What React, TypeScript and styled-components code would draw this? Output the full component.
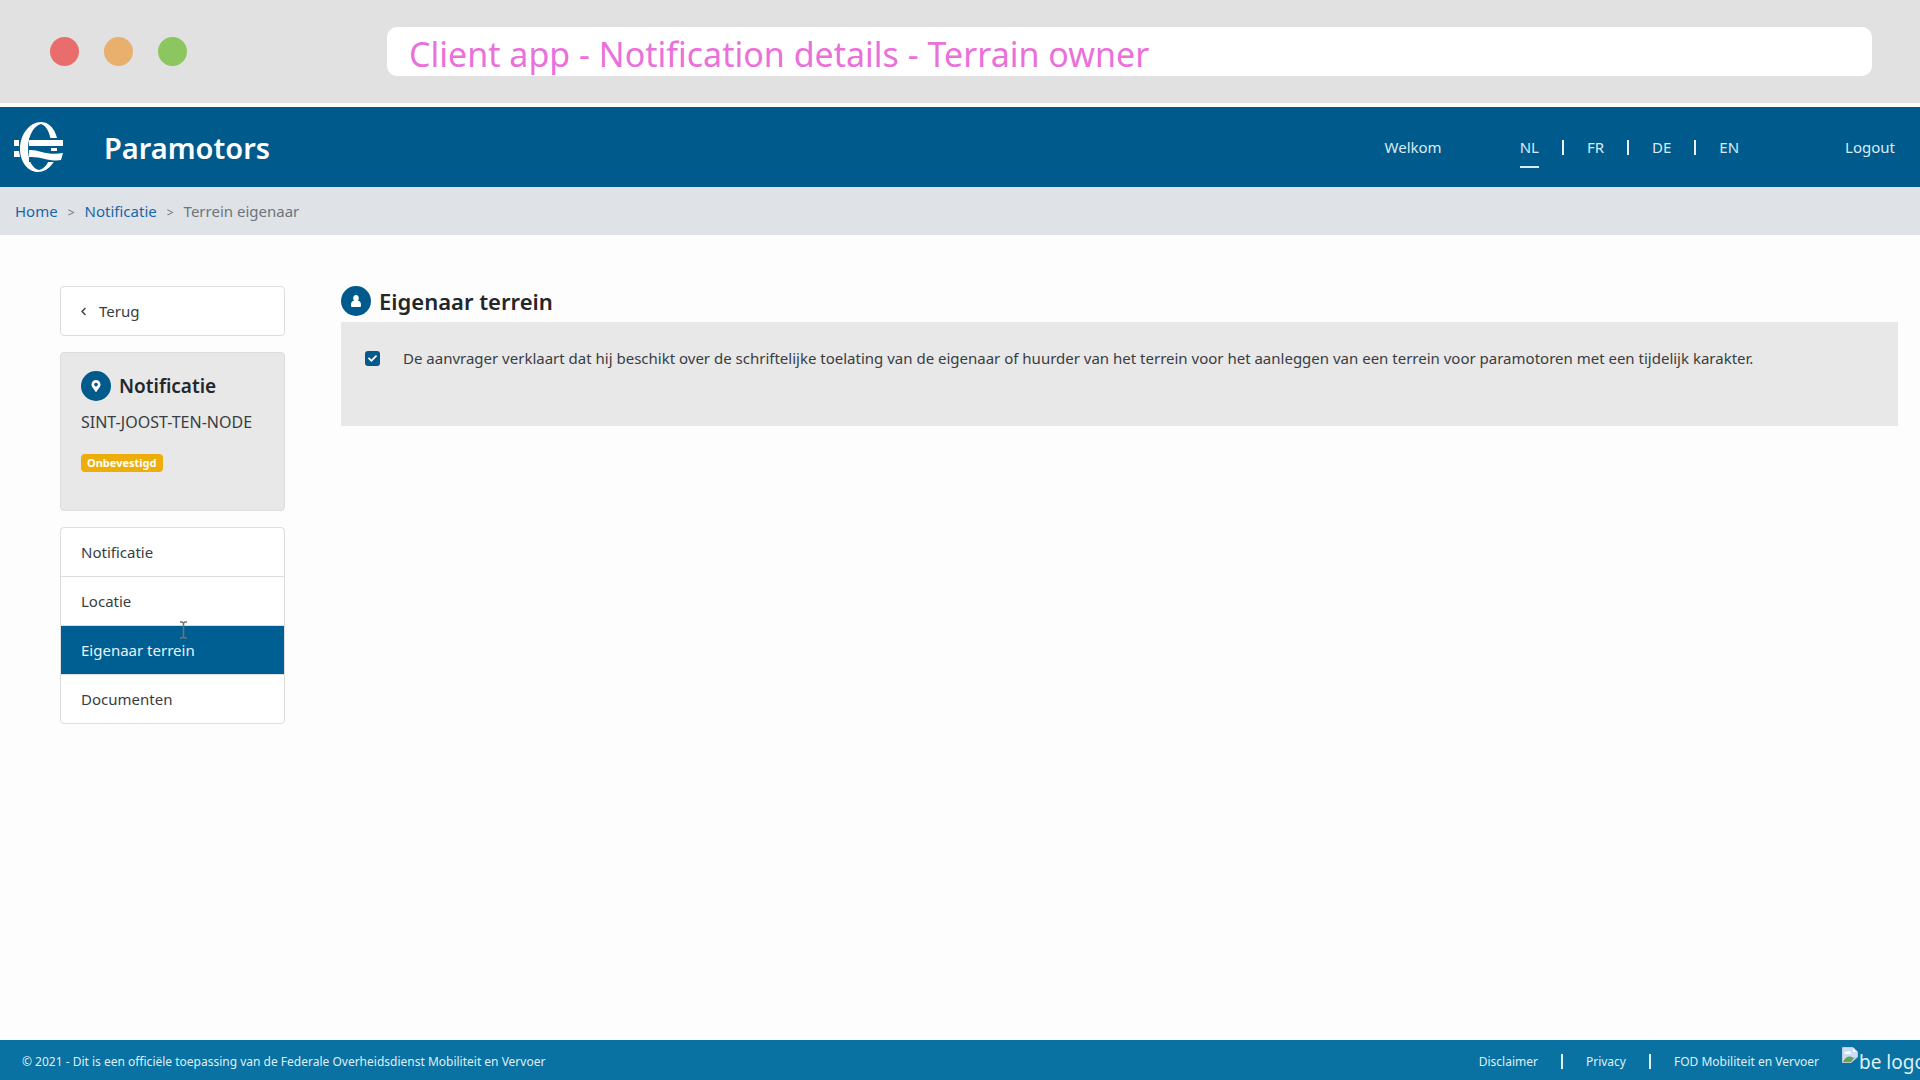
import React from "react";
import styled, { createGlobalStyle } from "styled-components";
import { FaCheck, FaMapMarkerAlt, FaChevronLeft } from "react-icons/fa";

const GlobalStyle = createGlobalStyle`
  *, *::before, *::after { box-sizing: border-box; }
  body {
    margin: 0;
    background: #fdfdfd;
    color: #383d42;
    font-family: "Noto Sans", "Open Sans", sans-serif;
    font-size: 15px;
    line-height: 24px;
  }
  h1, h2, p, ul, ol { margin: 0; padding: 0; }
  ul, ol { list-style: none; }
  a { color: inherit; text-decoration: none; }
`;

const Page = styled.div`
  display: flex;
  flex-direction: column;
  min-height: 100vh;
  overflow-x: hidden;
`;

const BrowserBar = styled.div`
  display: flex;
  align-items: center;
  padding: 27px 48px 27px 50px;
  background: #e1e1e1;
`;

const Dots = styled.div`
  display: flex;
  gap: 25px;
  margin-right: 200px;
`;

const Dot = styled.span<{ $color: string }>`
  width: 29px;
  height: 29px;
  border-radius: 50%;
  background: ${(p) => p.$color};
`;

const Address = styled.input`
  flex: 1;
  min-width: 0;
  height: 49px;
  padding: 4px 22px 0;
  border: 0;
  border-radius: 10px;
  background: #fff;
  color: #ea70da;
  font-family: "Noto Sans", "Open Sans", sans-serif;
  font-size: 34px;
  outline: none;
`;

const Header = styled.header`
  display: flex;
  align-items: center;
  height: 80px;
  margin-top: 4px;
  padding: 0 25px 0 13px;
  background: #005b8c;
  color: #fff;
`;

const Brand = styled.h1`
  margin-left: 38px;
  padding-top: 2px;
  font-size: 29px;
  line-height: 40px;
  font-weight: 600;
`;

const HeaderNav = styled.nav`
  display: flex;
  align-items: center;
  margin-left: auto;
  color: #d9ecf5;
`;

const Languages = styled.ul`
  display: flex;
  align-items: center;
  margin: 0 106px 0 78px;
`;

const Language = styled.li`
  display: flex;
  align-items: center;

  & + &::before {
    content: "";
    width: 2px;
    height: 15px;
    margin: 0 23px;
    background: #e6f2f7;
  }
`;

const LanguageLink = styled.a<{ $active?: boolean }>`
  padding: 9px 0 7px;
  border-bottom: 2px solid ${(p) => (p.$active ? "#d9ecf5" : "transparent")};
`;

const Breadcrumb = styled.nav`
  padding: 12px 15px;
  background: #dfe2e6;
  color: #6c757d;

  ol { display: flex; }
  li + li::before { content: ">"; margin: 0 10px; font-size: 12px; line-height: 12px; }
  a { color: #1767a8; }
`;

const Content = styled.div`
  display: flex;
  flex: 1;
  align-items: flex-start;
  gap: 56px;
  padding: 51px 22px 51px 60px;
`;

const Sidebar = styled.aside`
  display: flex;
  flex-direction: column;
  flex: none;
  gap: 16px;
  width: 225px;
`;

const BackButton = styled.button`
  display: flex;
  align-items: center;
  gap: 11px;
  height: 50px;
  padding: 0 18px;
  border: 1px solid #dcdddf;
  border-radius: 4px;
  background: #fff;
  color: #383d42;
  font: inherit;
`;

const Card = styled.section`
  height: 159px;
  padding: 18px 20px;
  border: 1px solid #dcdddf;
  border-radius: 4px;
  background: #e8e8e8;
`;

const Title = styled.h2<{ $size: number }>`
  display: flex;
  align-items: center;
  gap: 8px;
  color: #23272b;
  font-size: ${(p) => p.$size}px;
  line-height: 30px;
  font-weight: 600;
`;

const IconCircle = styled.span`
  display: grid;
  place-items: center;
  width: 30px;
  height: 30px;
  border-radius: 50%;
  background: #005b8c;
  color: #fff;
`;

const Location = styled.p`
  margin-top: 9px;
  font-size: 16px;
`;

const Badge = styled.span`
  display: inline-block;
  margin-top: 20px;
  padding: 0 6px;
  border-radius: 4px;
  background: #edae0c;
  color: #fff;
  font-size: 11px;
  line-height: 18px;
  font-weight: 700;
`;

const Menu = styled.ul`
  border: 1px solid #dcdddf;
  border-radius: 4px;
  background: #fff;

  li + li { border-top: 1px solid #dcdddf; }
`;

const MenuLink = styled.a<{ $active?: boolean }>`
  display: block;
  padding: 12px 20px;
  background: ${(p) => (p.$active ? "#005f92" : "transparent")};
  color: ${(p) => (p.$active ? "#e9f3f8" : "inherit")};
`;

const Main = styled.main`
  flex: 1;
  min-width: 0;
`;

const Panel = styled.div`
  min-height: 104px;
  margin-top: 6px;
  padding: 24px;
  background: #e8e8e8;
`;

const CheckLabel = styled.label`
  display: flex;
  align-items: center;
  gap: 23px;
`;

const CheckBox = styled.span`
  display: grid;
  flex: none;
  width: 15px;
  height: 15px;

  > * { grid-area: 1 / 1; place-self: center; }
  svg { color: #fff; pointer-events: none; }
`;

const CheckInput = styled.input`
  width: 15px;
  height: 15px;
  margin: 0;
  border-radius: 3px;
  appearance: none;
  background: #005b8c;
`;

const Footer = styled.footer`
  display: flex;
  align-items: center;
  justify-content: space-between;
  height: 40px;
  padding: 3px 0 0 22px;
  background: #0a71a3;
  color: #dff0f8;
  font-size: 12px;
  white-space: nowrap;
`;

const FooterLinks = styled.ul`
  display: flex;
  align-items: center;
`;

const FooterItem = styled.li`
  display: flex;
  align-items: center;

  & + &::before {
    content: "";
    width: 2px;
    height: 15px;
    margin: 0 23px;
    background: #dff0f8;
  }
`;

const MissingLogo = styled.li`
  display: flex;
  width: 78px;
  margin-left: 23px;
  overflow: hidden;
  font-size: 19px;
  line-height: 32px;

  svg { flex: none; }
`;

const PointerSpot = styled.div`
  position: relative;
`;

const Pointer = styled.svg`
  position: absolute;
  left: 119px;
  bottom: 85px;
`;

const MobilityLogo = () => (
  <svg width="53" height="52" viewBox="0 0 53 52" aria-hidden="true">
    <path fillRule="evenodd" fill="#fff" d="M28 1C38 1 45 12 45 25C45 39 36 51 25 51C15 51 7 41 7 28C7 13 17 1 28 1ZM28 3C21 5 15 14 15 28C15 40 20 48 26 49C34 47 38 38 38 25C38 13 34 5 28 3Z" />
    <path fill="#005b8c" d="M16 17H53V41H16Z" />
    <path fill="#fff" d="M1 19H6V25H1ZM16 19H50V25H16ZM1 30H6L7 36H1ZM16 29C25 28 34 35 50 32L48 39C37 41 27 35 16 36ZM38 27H44V30H38Z" />
  </svg>
);

const UserIcon = () => (
  <svg width="10" height="12" viewBox="0 0 11 13" aria-hidden="true">
    <path fill="currentColor" d="M5.500 0C7.500 0 8.600 1.500 8.600 3.400C8.600 4.600 8.200 5.600 7.500 6.300C9.800 6.500 11 8 11 10.500V12C11 12.600 10.600 13 10 13H1C.4 13 0 12.600 0 12V10.500C0 8 1.200 6.500 3.500 6.300C2.800 5.600 2.400 4.600 2.400 3.400C2.400 1.500 3.500 0 5.500 0Z" />
  </svg>
);

const BrokenImage = () => (
  <svg width="17" height="18" viewBox="0 0 17 18" aria-hidden="true">
    <path fill="#cbdcf5" stroke="#c3ccd2" d="M.5 1.500H11L15.500 6V11L9 16.500H.5Z" />
    <path fill="#fff" d="M11 2V6H15ZM3 8C2 6 4 5 5 6C6 4 9 5 9 8Z" />
    <path fill="#5ea653" d="M1 16C3 11 8 9 11 12L13 11L9 16Z" />
  </svg>
);

const languages = ["NL", "FR", "DE", "EN"];
const menu = ["Notificatie", "Locatie", "Eigenaar terrein", "Documenten"];

export default function App() {
  return (
    <Page>
      <GlobalStyle />
      <BrowserBar>
        <Dots>
          <Dot $color="#e96d6d" />
          <Dot $color="#e9af6d" />
          <Dot $color="#8bc65e" />
        </Dots>
        <Address aria-label="Address" readOnly value="Client app - Notification details - Terrain owner" />
      </BrowserBar>
      <Header>
        <MobilityLogo />
        <Brand>Paramotors</Brand>
        <HeaderNav>
          <span>Welkom</span>
          <Languages>
            {languages.map((code) => (
              <Language key={code}>
                <LanguageLink href="#" $active={code === "NL"}>{code}</LanguageLink>
              </Language>
            ))}
          </Languages>
          <a href="#">Logout</a>
        </HeaderNav>
      </Header>
      <Breadcrumb aria-label="Breadcrumb">
        <ol>
          <li><a href="#">Home</a></li>
          <li><a href="#">Notificatie</a></li>
          <li>Terrein eigenaar</li>
        </ol>
      </Breadcrumb>
      <Content>
        <Sidebar>
          <BackButton type="button">
            <FaChevronLeft size={9} />
            Terug
          </BackButton>
          <Card>
            <Title $size={19}>
              <IconCircle><FaMapMarkerAlt size={12} /></IconCircle>
              Notificatie
            </Title>
            <Location>SINT-JOOST-TEN-NODE</Location>
            <Badge>Onbevestigd</Badge>
          </Card>
          <PointerSpot>
            <Menu>
              {menu.map((item) => (
                <li key={item}>
                  <MenuLink href="#" $active={item === "Eigenaar terrein"}>{item}</MenuLink>
                </li>
              ))}
            </Menu>
            <Pointer width="9" height="18" viewBox="0 0 9 18" aria-hidden="true">
              <path d="M1 1H3L4.500 2L6 1H8M4.500 2V16M1 17H3L4.500 16L6 17H8" fill="none" stroke="#6d7276" strokeWidth="1.500" />
            </Pointer>
          </PointerSpot>
        </Sidebar>
        <Main>
          <Title $size={22}>
            <IconCircle><UserIcon /></IconCircle>
            Eigenaar terrein
          </Title>
          <Panel>
            <CheckLabel>
              <CheckBox>
                <CheckInput type="checkbox" defaultChecked />
                <FaCheck size={9} />
              </CheckBox>
              De aanvrager verklaart dat hij beschikt over de schriftelijke toelating van de eigenaar of huurder van het terrein voor het aanleggen van een terrein voor paramotoren met een tijdelijk karakter.
            </CheckLabel>
          </Panel>
        </Main>
      </Content>
      <Footer>
        <p>© 2021 - Dit is een officiële toepassing van de Federale Overheidsdienst Mobiliteit en Vervoer</p>
        <FooterLinks>
          <FooterItem><a href="#">Disclaimer</a></FooterItem>
          <FooterItem><a href="#">Privacy</a></FooterItem>
          <FooterItem><a href="#">FOD Mobiliteit en Vervoer</a></FooterItem>
          <MissingLogo><BrokenImage />be logo</MissingLogo>
        </FooterLinks>
      </Footer>
    </Page>
  );
}
